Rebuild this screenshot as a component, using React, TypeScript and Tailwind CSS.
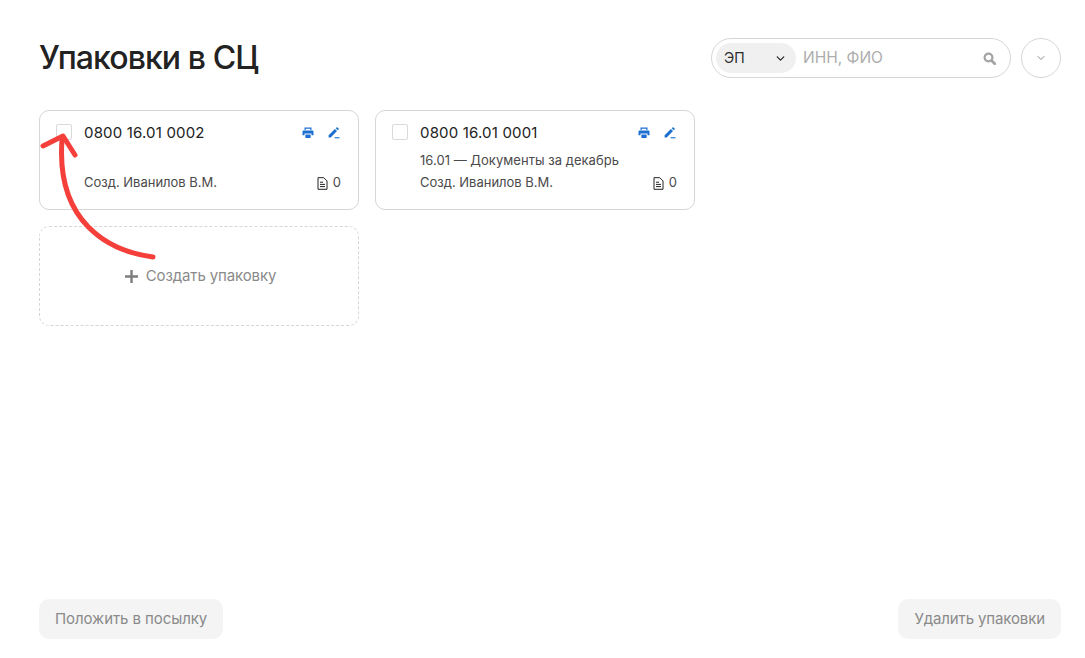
import { ChevronDown } from "lucide-react";

const font = { fontFamily: "Inter, 'Noto Sans', sans-serif" };

function PrinterIcon() {
  return (
    <svg width="12" height="12" viewBox="0 0 12 12" fill="#1a6fd0" aria-hidden>
      <path d="M2.5 0.5h7v2.6h-1.2V1.7H3.7v1.4H2.5z" />
      <path d="M1.4 3.6h9.2c.5 0 .9.4.9.9v3.7H9.5V6.6h-7v1.6H.5V4.5c0-.5.4-.9.9-.9z" />
      <path d="M3.4 7.5h5.2v3.5H3.4z" />
    </svg>
  );
}

function PenIcon() {
  return (
    <svg width="12" height="12" viewBox="0 0 12 12" fill="#1a6fd0" aria-hidden>
      <path d="M0.6 8.3 6.9 2l2.1 2.1-6.3 6.3H.6z" />
      <path d="M7.7 1.2 8.6.4c.3-.3.7-.3 1 0l1 1c.3.3.3.7 0 1l-.8.9z" />
      <path d="M6.6 10.2h4.9v1.1H6.6z" />
    </svg>
  );
}

function DocIcon() {
  return (
    <svg width="11" height="13" viewBox="0 0 11 13" fill="none" stroke="#222222" strokeWidth="1" aria-hidden>
      <path d="M1 .7h5.8L10 3.9v8.4H1z" />
      <path d="M3 5.2h3M3 7.4h5M3 9.6h5" />
    </svg>
  );
}

function SearchIcon() {
  return (
    <svg width="13" height="13" viewBox="0 0 13 13" fill="none" stroke="#a3a3a3" aria-hidden>
      <circle cx="5.5" cy="5.5" r="3.9" strokeWidth="2.2" />
      <path d="M8.5 8.5 11.8 11.8" strokeWidth="2.8" strokeLinecap="round" />
    </svg>
  );
}

function PlusIcon() {
  return (
    <svg width="13" height="13" viewBox="0 0 13 13" fill="#7d7d7d" aria-hidden>
      <path d="M5.3 0h2.4v5.3H13v2.4H7.7V13H5.3V7.7H0V5.3h5.3z" />
    </svg>
  );
}

function PackageCard({ code, note }: { code: string; note?: string }) {
  return (
    <div className="flex h-[100px] w-[320px] rounded-[10px] border border-[#d6d6d6] pl-4 pr-4 pt-[13px]">
      <div className="mr-3 h-4 w-4 shrink-0 rounded-[2px] border border-[#d9d9d9]" />
      <div className="flex min-w-0 flex-1 flex-col">
        <div className="flex h-[18px] items-center justify-between">
          <span className="text-[15px] font-normal tracking-[0.17px] text-[#222222]">{code}</span>
          <div className="mr-[2px] flex items-center gap-[14px]">
            <PrinterIcon />
            <PenIcon />
          </div>
        </div>
        <div className="mt-[9px] h-[18px] text-[13px] leading-[18px] tracking-[0.03px] text-[#4a4a4a]">{note}</div>
        <div className="mt-[5px] flex h-[18px] items-center justify-between text-[13px] text-[#4a4a4a]">
          <span>Созд. Иванилов В.М.</span>
          <span className="flex items-center gap-[5px] pr-[1px]">
            <DocIcon />0
          </span>
        </div>
      </div>
    </div>
  );
}

export default function App() {
  return (
    <div className="relative flex h-[658px] w-[1085px] flex-col bg-white pb-[19px] pl-[39px] pr-[24px] pt-[38px]" style={font}>
      <div className="flex h-10 items-center justify-between">
        <h1 className="text-[32px] font-medium tracking-[-0.9px] text-[#222222]">Упаковки в СЦ</h1>
        <div className="flex items-center gap-[10px]">
          <div className="flex h-10 w-[300px] items-center rounded-full border border-[#d6d6d6] pl-[4px] pr-[14px]">
            <div className="flex h-[30px] w-[80px] items-center justify-between rounded-full bg-[#f0f0f0] pl-2 pr-[9px] text-sm text-[#2b2b2b]">
              ЭП
              <ChevronDown size={13} strokeWidth={2.4} />
            </div>
            <span className="ml-[7px] flex-1 text-[15.5px] text-[#adadad]">ИНН, ФИО</span>
            <SearchIcon />
          </div>
          <div className="flex h-10 w-10 items-center justify-center rounded-full border border-[#d6d6d6]">
            <ChevronDown size={12} strokeWidth={2} className="text-[#8c8c8c]" />
          </div>
        </div>
      </div>

      <div className="mt-[32px] grid grid-cols-[320px_320px] gap-4">
        <PackageCard code="0800 16.01 0002" />
        <PackageCard code="0800 16.01 0001" note="16.01 — Документы за декабрь" />
        <div className="flex h-[100px] items-center justify-center gap-[8px] rounded-[10px] border border-dashed border-[#d6d6d6] pl-[3px] text-[15px] tracking-[-0.13px] text-[#8a8a8a]">
          <PlusIcon />
          Создать упаковку
        </div>
      </div>

      <div className="mt-auto flex justify-between">
        <button className="h-10 rounded-[10px] bg-[#f4f4f4] px-4 text-[15px] tracking-[-0.08px] text-[#8a8a8a]">Положить в посылку</button>
        <button className="h-10 rounded-[10px] bg-[#f4f4f4] px-4 text-[15px] tracking-[-0.12px] text-[#8a8a8a]">Удалить упаковки</button>
      </div>

      {/* annotation arrow drawn over the first card */}
      <svg className="pointer-events-none absolute left-0 top-0" width="200" height="280" fill="none" stroke="#f43f3b" strokeWidth="5" strokeLinecap="round" strokeLinejoin="round" aria-hidden>
        <path d="M153 257C108 251 56 222 62 140" />
        <path d="M43 146 63 136 75 155" />
      </svg>
    </div>
  );
}
